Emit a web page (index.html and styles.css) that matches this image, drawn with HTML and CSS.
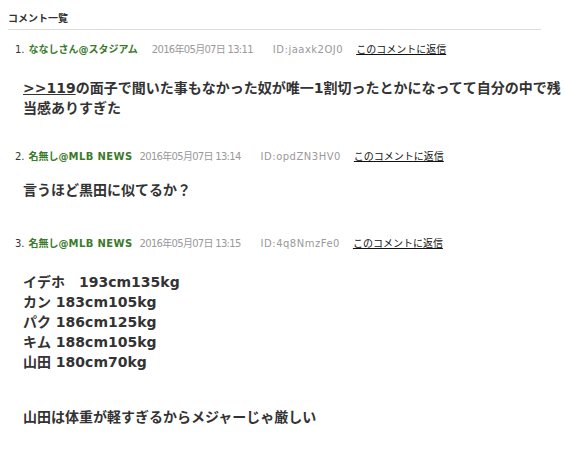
FILE: index.html
```html
<!DOCTYPE html>
<html lang="ja">
<head>
<meta charset="utf-8">
<link rel="stylesheet" href="styles.css">
</head>
<body>
<div class="page">
  <h2 class="title">コメント一覧</h2>
  <div class="comments">
    <div class="comment comment-a">
      <div class="meta">
        <span class="num">1.</span>
        <span class="name">ななしさん@スタジアム</span>
        <span class="date">2016年05月07日 13:11</span>
        <span class="id">ID:jaaxk2OJ0</span>
        <a class="reply" href="#">このコメントに返信</a>
      </div>
      <div class="body"><a class="anchor" href="#">&gt;&gt;119</a>の面子で聞いた事もなかった奴が唯一1割切ったとかになってて自分の中で残当感ありすぎた</div>
    </div>
    <div class="comment comment-b">
      <div class="meta">
        <span class="num">2.</span>
        <span class="name">名無し@<span class="latin">MLB NEWS</span></span>
        <span class="date">2016年05月07日 13:14</span>
        <span class="id">ID:opdZN3HV0</span>
        <a class="reply" href="#">このコメントに返信</a>
      </div>
      <div class="body">言うほど黒田に似てるか？</div>
    </div>
    <div class="comment comment-c">
      <div class="meta">
        <span class="num">3.</span>
        <span class="name">名無し@<span class="latin">MLB NEWS</span></span>
        <span class="date">2016年05月07日 13:15</span>
        <span class="id">ID:4q8NmzFe0</span>
        <a class="reply" href="#">このコメントに返信</a>
      </div>
      <div class="body">イデホ　193cm135kg<br>カン 183cm105kg<br>パク 186cm125kg<br>キム 188cm105kg<br>山田 180cm70kg
        <div class="para">山田は体重が軽すぎるからメジャーじゃ厳しい</div>
      </div>
    </div>
  </div>
</div>
</body>
</html>
```
FILE: styles.css
```css
html, body {
  margin: 0;
  padding: 0;
  background: #fff;
}
body {
  font-family: "DejaVu Sans", "Noto Sans CJK JP", sans-serif;
  color: #333;
}
.page {
  padding: 8px 0 0 8px;
}
.title {
  margin: 0 24px 0 0;
  font-size: 10px;
  font-weight: bold;
  line-height: 18px;
  padding: 2px 0 1px;
  border-bottom: 1px solid #ddd;
  color: #333;
}
.comments {
  padding-top: 12px;
}
.meta {
  display: flex;
  align-items: baseline;
  font-size: 10px;
  line-height: 16px;
  padding-left: 7px;
  color: #999;
}
.num {
  color: #333;
  margin-right: 4px;
}
.name {
  color: #3a7a2a;
  font-weight: bold;
  margin-right: 7px;
}
.comment-a .name {
  margin-right: 14px;
}
.latin {
  letter-spacing: 0.4px;
}
.date {
  margin-right: 20px;
  letter-spacing: -0.7px;
}
.id {
  margin-right: 13px;
  letter-spacing: 0.5px;
}
.reply {
  color: #111;
  text-decoration: underline;
}
.body {
  padding: 20px 0 0 15px;
  font-size: 14px;
  font-weight: bold;
  line-height: 20px;
  color: #333;
}
.comment-a .body {
  padding-top: 20px;
}
.comment-a {
  padding-bottom: 31px;
}
.comment-b .body {
  padding-top: 15px;
}
.comment-b {
  padding-bottom: 36px;
}
.para {
  margin-top: 35px;
}
.anchor {
  color: #333;
  text-decoration: underline;
}
```
